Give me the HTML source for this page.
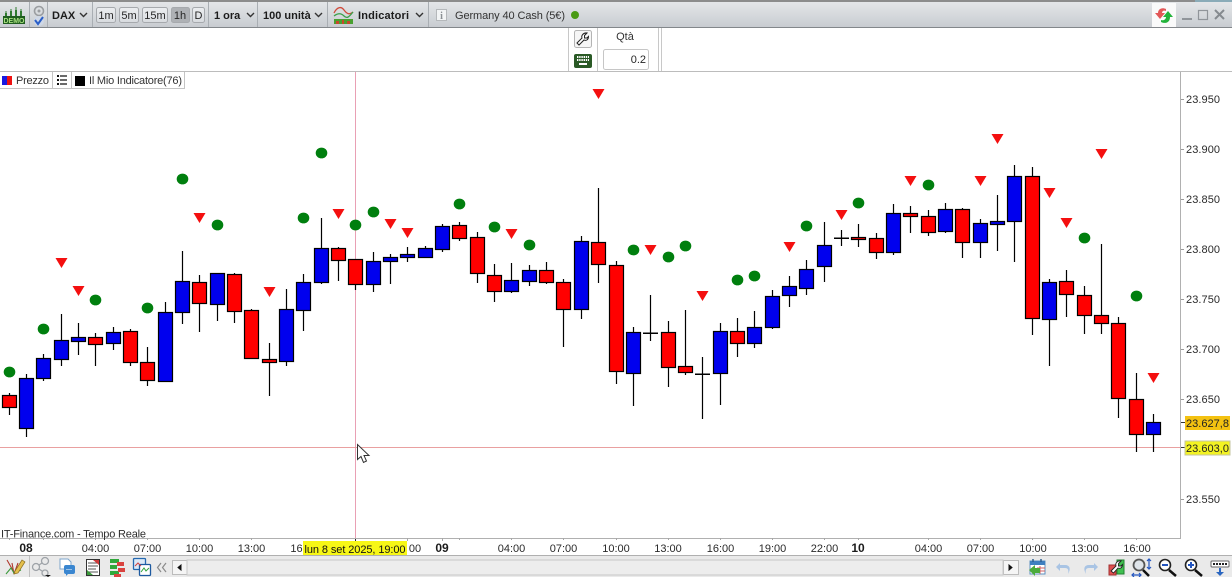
<!DOCTYPE html>
<html lang="it">
<head>
<meta charset="utf-8">
<title>Chart</title>
<style>
html,body{margin:0;padding:0;background:#fff;width:1232px;height:577px;overflow:hidden}
svg{display:block;font-family:"Liberation Sans",Arial,sans-serif}
.b{font-weight:bold;font-size:11px;fill:#1c1c1c}
.t{font-size:11px;fill:#262626}
.y{font-size:11px;fill:#2a2a2a}
.x{font-size:11px;fill:#2a2a2a;text-anchor:middle}
.xb{font-size:12px;font-weight:bold;fill:#1c1c1c;text-anchor:middle}
</style>
</head>
<body>
<svg width="1232" height="577" viewBox="0 0 1232 577" xmlns="http://www.w3.org/2000/svg">
<defs>
<linearGradient id="tb" x1="0" y1="0" x2="0" y2="1"><stop offset="0" stop-color="#e6e8ea"/><stop offset="1" stop-color="#c8ccd1"/></linearGradient>
<linearGradient id="btn" x1="0" y1="0" x2="0" y2="1"><stop offset="0" stop-color="#eceef0"/><stop offset="1" stop-color="#d8dbdf"/></linearGradient>
</defs>
<rect width="1232" height="577" fill="#fff"/>

<!-- top toolbar -->
<rect x="0" y="0" width="1232" height="27" fill="url(#tb)"/>
<rect x="0" y="0" width="1195" height="2" fill="#8c8c8c"/>
<rect x="1195" y="0" width="37" height="2" fill="#8aabb8"/>
<rect x="0" y="27" width="1232" height="1" fill="#83878b"/>
<g fill="#a9aeb3">
<rect x="29" y="2" width="1" height="25"/><rect x="47" y="2" width="1" height="25"/><rect x="92" y="2" width="1" height="25"/><rect x="208" y="2" width="1" height="25"/><rect x="257" y="2" width="1" height="25"/><rect x="327" y="2" width="1" height="25"/><rect x="428" y="2" width="1" height="25"/>
</g>

<!-- demo icon -->
<g>
<rect x="3" y="16" width="22" height="8" fill="#1f5c1f"/>
<text x="3.500" y="22.800" font-size="7.500" font-weight="bold" fill="#a8e080" textLength="21" lengthAdjust="spacingAndGlyphs">DEMO</text>
<path d="M6 11v5M11 9v7M16 7v9M21 9v7" stroke="#2e7a2e" stroke-width="1"/>
<path d="M5 13h2v3H5zM10 11h2v5h-2zM15 10h2v6h-2zM20 11h2v5h-2z" fill="#2e7a2e"/>
</g>
<!-- @ check icon -->
<circle cx="39" cy="11" r="4.500" fill="none" stroke="#9a9da0" stroke-width="1.600"/>
<circle cx="39" cy="11" r="1.500" fill="#9a9da0"/>
<circle cx="39" cy="21" r="5" fill="#cfd8e6"/>
<path d="M35 20l3 4 5-7" fill="none" stroke="#2a5fc8" stroke-width="2"/>

<text class="b" x="52" y="19">DAX</text>
<path d="M80 13l3.500 3.500L87 13" fill="none" stroke="#333" stroke-width="1.400"/>

<g stroke="#a6a9ad" fill="url(#btn)">
<rect x="96.500" y="7.500" width="19" height="15" rx="2"/>
<rect x="119.500" y="7.500" width="19" height="15" rx="2"/>
<rect x="142.500" y="7.500" width="25" height="15" rx="2"/>
<rect x="171.500" y="7.500" width="18" height="15" rx="2" fill="#aeb1b5"/>
<rect x="192.500" y="7.500" width="12" height="15" rx="2"/>
</g>
<text class="t" x="106" y="19" text-anchor="middle">1m</text>
<text class="t" x="129" y="19" text-anchor="middle">5m</text>
<text class="t" x="155" y="19" text-anchor="middle">15m</text>
<text class="t" x="180" y="19" text-anchor="middle">1h</text>
<text class="t" x="198.500" y="19" text-anchor="middle">D</text>
<text class="b" x="214" y="19">1 ora</text>
<path d="M247 13l3.500 3.500L254 13" fill="none" stroke="#333" stroke-width="1.400"/>
<text class="b" x="263" y="19">100 unità</text>
<path d="M315 13l3.500 3.500L322 13" fill="none" stroke="#333" stroke-width="1.400"/>

<!-- indicator icon -->
<path d="M334 13c3-6 7-7 10-3s5 5 9 2" fill="none" stroke="#d04a3a" stroke-width="1.300"/>
<path d="M334 16c4-3 7-3 10 0s5 1 9-4" fill="none" stroke="#3aa04a" stroke-width="1.300"/>
<rect x="334" y="19" width="19" height="5" fill="#49a030"/>
<path d="M336 21h3v3h-3zM342 20h2v4h-2zM347 21h3v3h-3z" fill="#c8482c"/>
<text class="b" x="358" y="19" textLength="51">Indicatori</text>
<path d="M416 13l3.500 3.500L423 13" fill="none" stroke="#333" stroke-width="1.400"/>

<!-- info -->
<rect x="436.500" y="9.500" width="10" height="11" fill="#f2f4f5" stroke="#b5b8bb"/>
<text x="441.500" y="19" font-size="10" font-weight="bold" fill="#8a8f94" text-anchor="middle" font-family="Liberation Serif">i</text>
<text class="t" x="455" y="19" style="fill:#333" textLength="110">Germany 40 Cash (5€)</text>
<circle cx="575" cy="15" r="4" fill="#4a9a14"/>

<!-- refresh -->
<rect x="1152" y="3" width="24" height="24" fill="#fafafa"/>
<path d="M1166 9c-4-2-8 0-8 4h-3l5 6 5-6h-3c0-2 2-3 4-2z" fill="#e25858"/>
<path d="M1161 22c4 2 9 1 9-5h3l-5-6-5 6h3c0 2-2 4-5 3z" fill="#22b33a"/>

<!-- window buttons -->
<rect x="1182" y="18" width="10" height="2" fill="#90959a"/>
<rect x="1198.500" y="10.500" width="9" height="9" fill="none" stroke="#90959a" stroke-width="1.200"/>
<path d="M1215 10l9 9M1224 10l-9 9" stroke="#858a8f" stroke-width="2"/>

<!-- middle panel -->
<rect x="0" y="71" width="1232" height="1" fill="#bcbcbc"/>
<g fill="#c8c8c8">
<rect x="568" y="28" width="1" height="43"/><rect x="597" y="28" width="1" height="43"/><rect x="658" y="28" width="1" height="43"/><rect x="661" y="28" width="1" height="43"/>
</g>
<rect x="574.500" y="30.500" width="17" height="17" rx="2" fill="#f6f6f6" stroke="#b4b4b4"/>
<path d="M587 33l-2.500 2.500 0 2.500 2.500 0 1.500-1.500c0 3-2 4.500-4.500 3.500l-5 5-2-2 5-5c-1-2.500 1.500-5.500 5-5z" fill="#fff" stroke="#222" stroke-width="1"/>
<rect x="574" y="54" width="18" height="14" rx="2" fill="#2a5a26"/>
<path d="M577 57h12M577 60h12" stroke="#fff" stroke-width="2" stroke-dasharray="1.400 .8"/>
<rect x="579" y="63" width="8" height="2" fill="#fff"/>
<text class="t" x="625" y="40" text-anchor="middle" style="fill:#333">Qtà</text>
<rect x="603.500" y="49.500" width="45" height="20" rx="2" fill="#fff" stroke="#c6c6c6"/>
<text class="t" x="646" y="63" text-anchor="end">0.2</text>

<!-- legend -->
<rect x="0" y="88" width="185" height="1" fill="#c4c4c4"/>
<rect x="52" y="72" width="1" height="16" fill="#c4c4c4"/>
<rect x="71" y="72" width="1" height="16" fill="#c4c4c4"/>
<rect x="184" y="72" width="1" height="16" fill="#c4c4c4"/>
<rect x="2" y="76" width="5" height="9" fill="#1a1ae0"/>
<rect x="7" y="76" width="5" height="9" fill="#ee1111"/>
<text class="t" x="16" y="84" style="fill:#333" textLength="33">Prezzo</text>
<path d="M57 76h2M57 80h2M57 84h2" stroke="#111" stroke-width="2"/>
<path d="M60 76h7M60 80h7M60 84h7" stroke="#111" stroke-width="1.200"/>
<rect x="75" y="76" width="10" height="10" fill="#000"/>
<text class="t" x="89" y="84" style="fill:#333" textLength="93">Il Mio Indicatore(76)</text>

<!-- crosshair -->
<rect x="355" y="72" width="1" height="466" fill="#e9a0b4"/>
<rect x="0" y="447" width="1185" height="1" fill="#e9a0a0"/>

<!-- wicks -->
<path stroke="#000" stroke-width="1.200" fill="none" d="M9.500 393V415M26.500 374V437M43.500 354V381M61.500 314V366M78.500 323V355M95.500 333V366M113.500 327V350M130.500 329V366M147.500 347V386M165.500 302V382M182.500 251V324M199.500 275V332M217.500 273V321M234.500 273V323M251.500 309V359M269.500 343V396M286.500 289V366M303.500 274V331M321.500 218V284M338.500 247V281M355.500 259V290M373.500 252V292M390.500 254V284M407.500 247V262M425.500 246V258M442.500 224V252M459.500 222V241M477.500 232V283M494.500 264V302M511.500 263V293M529.500 265V286M546.500 262V284M563.500 279V347M581.500 236V319M598.500 188V283M616.500 261V384M633.500 327V406M650.500 295V341M668.500 321V387M685.500 310V375M702.500 357V419M720.500 323V405M737.500 318V357M754.500 311V348M772.500 290V329M789.500 276V307M806.500 260V295M824.500 222V282M841.500 230V246M858.500 224V247M876.500 233V259M893.500 204V255M910.500 206V233M928.500 210V236M945.500 203V233M962.500 208V258M980.500 219V258M997.500 195V251M1014.500 165V262M1032.500 167V335M1049.500 279V366M1066.500 270V317M1084.500 286V334M1101.500 244V334M1118.500 317V418M1136.500 373V452M1153.500 414V452"/>

<!-- red bodies -->
<g fill="#ff0000" stroke="#000" stroke-width="1.200">
<rect x="2.500" y="395.500" width="14" height="12"/><rect x="88.500" y="337.500" width="14" height="7"/><rect x="123.500" y="331.500" width="14" height="31"/><rect x="140.500" y="362.500" width="14" height="18"/><rect x="192.500" y="282.500" width="14" height="21"/><rect x="227.500" y="274.500" width="14" height="37"/><rect x="244.500" y="310.500" width="14" height="48"/><rect x="262.500" y="359.500" width="14" height="3"/><rect x="331.500" y="248.500" width="14" height="12"/><rect x="348.500" y="259.500" width="14" height="25"/><rect x="452.500" y="225.500" width="14" height="13"/><rect x="470.500" y="237.500" width="14" height="36"/><rect x="487.500" y="275.500" width="14" height="16"/><rect x="539.500" y="270.500" width="14" height="12"/><rect x="556.500" y="282.500" width="14" height="27"/><rect x="591.500" y="242.500" width="14" height="22"/><rect x="609.500" y="265.500" width="14" height="106"/><rect x="661.500" y="332.500" width="14" height="35"/><rect x="678.500" y="366.500" width="14" height="6"/><rect x="730.500" y="331.500" width="14" height="12"/><rect x="851.500" y="237.500" width="14" height="2"/><rect x="869.500" y="238.500" width="14" height="14"/><rect x="903.500" y="213.500" width="14" height="3"/><rect x="921.500" y="216.500" width="14" height="16"/><rect x="955.500" y="209.500" width="14" height="33"/><rect x="1025.500" y="176.500" width="14" height="142"/><rect x="1059.500" y="281.500" width="14" height="13"/><rect x="1077.500" y="295.500" width="14" height="20"/><rect x="1094.500" y="315.500" width="14" height="8"/><rect x="1111.500" y="323.500" width="14" height="75"/><rect x="1129.500" y="399.500" width="14" height="35"/>
</g>
<!-- blue bodies -->
<g fill="#0000ee" stroke="#000" stroke-width="1.200">
<rect x="19.500" y="378.500" width="14" height="50"/><rect x="36.500" y="358.500" width="14" height="20"/><rect x="54.500" y="340.500" width="14" height="19"/><rect x="71.500" y="337.500" width="14" height="4"/><rect x="106.500" y="332.500" width="14" height="11"/><rect x="158.500" y="312.500" width="14" height="69"/><rect x="175.500" y="281.500" width="14" height="31"/><rect x="210.500" y="273.500" width="14" height="31"/><rect x="279.500" y="309.500" width="14" height="52"/><rect x="296.500" y="282.500" width="14" height="28"/><rect x="314.500" y="248.500" width="14" height="34"/><rect x="366.500" y="261.500" width="14" height="23"/><rect x="383.500" y="257.500" width="14" height="4"/><rect x="400.500" y="254.500" width="14" height="3"/><rect x="418.500" y="248.500" width="14" height="9"/><rect x="435.500" y="226.500" width="14" height="23"/><rect x="504.500" y="280.500" width="14" height="11"/><rect x="522.500" y="270.500" width="14" height="11"/><rect x="574.500" y="241.500" width="14" height="68"/><rect x="626.500" y="332.500" width="14" height="41"/><rect x="713.500" y="331.500" width="14" height="42"/><rect x="747.500" y="327.500" width="14" height="16"/><rect x="765.500" y="296.500" width="14" height="31"/><rect x="782.500" y="286.500" width="14" height="9"/><rect x="799.500" y="269.500" width="14" height="19"/><rect x="817.500" y="245.500" width="14" height="21"/><rect x="886.500" y="213.500" width="14" height="39"/><rect x="938.500" y="209.500" width="14" height="22"/><rect x="973.500" y="223.500" width="14" height="19"/><rect x="990.500" y="221.500" width="14" height="3"/><rect x="1007.500" y="176.500" width="14" height="45"/><rect x="1042.500" y="282.500" width="14" height="37"/><rect x="1146.500" y="422.500" width="14" height="12"/>
</g>
<!-- dojis -->
<g fill="#000">
<rect x="643" y="332.500" width="15" height="1.500"/><rect x="695" y="373.500" width="15" height="1.500"/><rect x="834" y="237.500" width="15" height="1.500"/>
</g>

<!-- green dots -->
<g fill="#007f0e">
<ellipse cx="9.500" cy="372" rx="5.800" ry="5.400"/><ellipse cx="43.500" cy="329" rx="5.800" ry="5.400"/><ellipse cx="95.500" cy="300" rx="5.800" ry="5.400"/><ellipse cx="147.500" cy="308" rx="5.800" ry="5.400"/><ellipse cx="182.500" cy="179" rx="5.800" ry="5.400"/><ellipse cx="217.500" cy="225" rx="5.800" ry="5.400"/><ellipse cx="303.500" cy="218" rx="5.800" ry="5.400"/><ellipse cx="321.500" cy="153" rx="5.800" ry="5.400"/><ellipse cx="355.500" cy="225" rx="5.800" ry="5.400"/><ellipse cx="373.500" cy="212" rx="5.800" ry="5.400"/><ellipse cx="459.500" cy="204" rx="5.800" ry="5.400"/><ellipse cx="494.500" cy="227" rx="5.800" ry="5.400"/><ellipse cx="529.500" cy="245" rx="5.800" ry="5.400"/><ellipse cx="633.500" cy="250" rx="5.800" ry="5.400"/><ellipse cx="668.500" cy="257" rx="5.800" ry="5.400"/><ellipse cx="685.500" cy="246" rx="5.800" ry="5.400"/><ellipse cx="737.500" cy="280" rx="5.800" ry="5.400"/><ellipse cx="754.500" cy="276" rx="5.800" ry="5.400"/><ellipse cx="806.500" cy="226" rx="5.800" ry="5.400"/><ellipse cx="858.500" cy="203" rx="5.800" ry="5.400"/><ellipse cx="928.500" cy="185" rx="5.800" ry="5.400"/><ellipse cx="1084.500" cy="238" rx="5.800" ry="5.400"/><ellipse cx="1136.500" cy="296" rx="5.800" ry="5.400"/>
</g>
<!-- red triangles -->
<g fill="#f40f0f">
<path d="M55.500 258h12l-6 10zM72.500 286h12l-6 10zM193.500 213h12l-6 10zM263.500 287h12l-6 10zM332.500 209h12l-6 10zM384.500 219h12l-6 10zM401.500 228h12l-6 10zM505.500 229h12l-6 10zM592.500 89h12l-6 10zM644.500 245h12l-6 10zM696.500 291h12l-6 10zM783.500 242h12l-6 10zM835.500 210h12l-6 10zM904.500 176h12l-6 10zM974.500 176h12l-6 10zM991.500 134h12l-6 10zM1043.500 188h12l-6 10zM1060.500 218h12l-6 10zM1095.500 149h12l-6 10zM1147.500 373h12l-6 10z"/>
</g>

<!-- right axis -->
<rect x="1180" y="72" width="1" height="466" fill="#b0b0b0"/>
<rect x="0" y="538" width="1181" height="1" fill="#b0b0b0"/>
<g fill="#9a9a9a">
<rect x="1181" y="99" width="3" height="1"/><rect x="1181" y="149" width="3" height="1"/><rect x="1181" y="199" width="3" height="1"/><rect x="1181" y="249" width="3" height="1"/><rect x="1181" y="299" width="3" height="1"/><rect x="1181" y="349" width="3" height="1"/><rect x="1181" y="399" width="3" height="1"/><rect x="1181" y="499" width="3" height="1"/>
</g>
<text class="y" x="1186" y="103" textLength="34">23.950</text><text class="y" x="1186" y="153" textLength="34">23.900</text><text class="y" x="1186" y="203" textLength="34">23.850</text><text class="y" x="1186" y="253" textLength="34">23.800</text><text class="y" x="1186" y="303" textLength="34">23.750</text><text class="y" x="1186" y="353" textLength="34">23.700</text><text class="y" x="1186" y="403" textLength="34">23.650</text><text class="y" x="1186" y="503" textLength="34">23.550</text>
<rect x="1181" y="422" width="4" height="1" fill="#333"/>
<rect x="1181" y="447" width="4" height="1" fill="#333"/>
<rect x="1185" y="416" width="45" height="14" fill="#f4c211"/>
<text class="y" x="1186" y="427" style="fill:#222" textLength="43">23.627,8</text>
<rect x="1185" y="441" width="45" height="14" fill="#f3f323" stroke="#c4c4a0"/>
<text class="y" x="1186" y="452" style="fill:#222" textLength="43">23.603,0</text>

<!-- source -->
<text x="1" y="537.500" font-size="11" fill="#2e2e2e" textLength="145">IT-Finance.com - Tempo Reale</text>

<!-- x ticks -->
<path stroke="#a8a8a8" d="M9.500 538v2M43.500 538v2M95.500 538v2M147.500 538v2M199.500 538v2M251.500 538v2M407.500 538v3M442.500 538v3M459.500 538v2M511.500 538v2M563.500 538v2M616.500 538v2M668.500 538v2M720.500 538v2M772.500 538v2M824.500 538v2M858.500 538v2M928.500 538v2M980.500 538v2M1032.500 538v2M1084.500 538v2M1136.500 538v2" fill="none"/>
<rect x="355" y="539" width="1" height="2" fill="#222"/>

<!-- x labels -->
<text class="xb" x="26" y="552">08</text>
<text class="x" x="95.500" y="552">04:00</text>
<text class="x" x="147.500" y="552">07:00</text>
<text class="x" x="199.500" y="552">10:00</text>
<text class="x" x="251.500" y="552">13:00</text>
<text class="x" x="296.500" y="552">16</text>
<rect x="303" y="541" width="104" height="14" fill="#f7f716"/>
<text x="304.500" y="553" font-size="11" fill="#111" textLength="101">lun 8 set 2025, 19:00</text>
<text class="x" x="415" y="552">00</text>
<text class="xb" x="442" y="552">09</text>
<text class="x" x="511.500" y="552">04:00</text>
<text class="x" x="563.500" y="552">07:00</text>
<text class="x" x="616" y="552">10:00</text>
<text class="x" x="668" y="552">13:00</text>
<text class="x" x="720.500" y="552">16:00</text>
<text class="x" x="772.500" y="552">19:00</text>
<text class="x" x="824.500" y="552">22:00</text>
<text class="xb" x="858" y="552">10</text>
<text class="x" x="928.500" y="552">04:00</text>
<text class="x" x="980.500" y="552">07:00</text>
<text class="x" x="1033" y="552">10:00</text>
<text class="x" x="1085" y="552">13:00</text>
<text class="x" x="1137" y="552">16:00</text>

<!-- mouse pointer -->
<path d="M357.500 444.500v15l3.500-3 2.500 6 3-1.500-2.500-5.500h5z" fill="#fff" stroke="#333" stroke-width="1"/>

<!-- bottom toolbar -->
<rect x="0" y="555" width="1232" height="1" fill="#b0b0b0"/>
<rect x="0" y="556" width="1232" height="21" fill="#eaeaea"/>
<rect x="29" y="556" width="1" height="21" fill="#c0c0c0"/>

<!-- pencil chart -->
<path d="M7 560l8 14M12 563l2 11M18 563l-4 11" stroke="#b0392d" stroke-width="1.100" fill="none"/>
<path d="M6 574l5-6 3 5 7-3" stroke="#3d9a3d" stroke-width="1.100" fill="none"/>
<path d="M15 571l7-11 3 2-7 11-4 1z" fill="#e4bf4c" stroke="#8a6d20" stroke-width=".7"/>
<!-- share -->
<g fill="none" stroke="#9ea3a8" stroke-width="1.300"><circle cx="45" cy="561" r="3.500"/><circle cx="36" cy="567" r="3.500"/><circle cx="45" cy="573" r="3"/><path d="M39 565l3-2M39 569l3 2"/></g>
<path d="M45 575h6l-3 2z" fill="#111"/>
<!-- doc chat -->
<path d="M60 559h8l3 3v7h-11z" fill="#fff" stroke="#7ea6cc"/>
<rect x="64" y="565" width="11" height="9" rx="2" fill="#3a86d0"/>
<path d="M66 573v3l3-3z" fill="#3a86d0"/>
<path d="M66.500 569.500h6" stroke="#fff" stroke-dasharray="1 1"/>
<!-- notes -->
<rect x="86.500" y="559.500" width="13" height="16" fill="#fff" stroke="#333"/>
<path d="M88 563h10M88 566h10M88 569h8M88 572h10" stroke="#555"/>
<path d="M93 560h6v5z" fill="#cf3b3b"/>
<path d="M87 570l6 5h-6z" fill="#3c9b3c"/>
<!-- bricks -->
<g fill="#2fa83a"><rect x="110" y="559" width="9" height="4"/><rect x="110" y="565" width="7" height="4"/><rect x="110" y="571" width="9" height="4"/></g>
<g fill="#d9433f"><rect x="117" y="562" width="7" height="4"/><rect x="118" y="568" width="7" height="4"/><rect x="114" y="574" width="7" height="3"/></g>
<!-- windows -->
<rect x="133.500" y="558.500" width="12" height="11" rx="1" fill="#dbe9f7" stroke="#2468b0" stroke-width="1.300"/>
<rect x="139.500" y="564.500" width="11" height="11" rx="1" fill="#fff" stroke="#1d5aa0" stroke-width="1.300"/>
<path d="M135 566l3-3 3 3" stroke="#d04040" fill="none"/>
<path d="M141 572l3-4 2 3 3-3" stroke="#2ea03a" fill="none"/>
<!-- chevrons left -->
<path d="M161 563l-3.500 4.500 3.500 4.500M166 563l-3.500 4.500 3.500 4.500" fill="none" stroke="#8a8a8a" stroke-width="1.200"/>

<!-- scrollbar -->
<rect x="172" y="560" width="847" height="15" fill="#e4e4e4"/>
<rect x="172.500" y="560.500" width="15" height="14" fill="#f5f5f5" stroke="#bcbcbc"/>
<rect x="1003.500" y="560.500" width="15" height="14" fill="#f5f5f5" stroke="#bcbcbc"/>
<rect x="187" y="560" width="816" height="15" fill="#ededed" stroke="#c8c8c8"/>
<path d="M181 565l-3 2.500 3 2.500z" fill="#111" stroke="#111"/>
<path d="M1009 565l3 2.500-3 2.500z" fill="#111" stroke="#111"/>

<!-- calendar -->
<rect x="1030" y="561" width="15" height="13" fill="#fff" stroke="#5f90c0"/>
<rect x="1030" y="561" width="15" height="4" fill="#3f7fc0"/>
<path d="M1033 559v3M1041 559v3" stroke="#2d5f90" stroke-width="1.500"/>
<path d="M1037 568h8M1037 571h8M1040 566v8" stroke="#d06060"/>
<path d="M1029 570l6-5v3h5v5h-5v3z" fill="#4cab3c"/>
<!-- undo / redo -->
<path d="M1060 563l-4 4 4 4v-3h5c3 0 4 2 3 6 3-5 2-9-3-9h-5z" fill="#a9c4e4"/>
<path d="M1094 563l4 4-4 4v-3h-5c-3 0-4 2-3 6-3-5-2-9 3-9h5z" fill="#a9c4e4"/>
<!-- wrench candle -->
<rect x="1109" y="565" width="7" height="10" fill="#e05050" stroke="#a03030"/>
<rect x="1117" y="560" width="7" height="14" fill="#3fc050" stroke="#208030"/>
<path d="M1121 561l-2.500 2.500v2.500h2.500l1.500-1.500c0 3-2 4.500-4.500 3.500l-4.500 5-2.500-2 5-5c-1-3 1.500-5.500 4.500-5z" fill="#fff" stroke="#222" stroke-width=".9"/>
<!-- magnifier with arrows -->
<circle cx="1139" cy="565" r="5.500" fill="#dfe4ea" stroke="#555" stroke-width="1.800"/>
<path d="M1143 570l6 6" stroke="#111" stroke-width="2.500"/>
<path d="M1149 559v10M1147 561l2-2 2 2M1147 567l2 2 2-2" fill="none" stroke="#2456c0" stroke-width="1.200"/>
<path d="M1132 575h9M1134 573l-2 2 2 2M1139 573l2 2-2 2" fill="none" stroke="#2456c0" stroke-width="1.200"/>
<!-- zoom minus -->
<circle cx="1165" cy="565" r="5.500" fill="#fff" stroke="#222" stroke-width="1.600"/>
<path d="M1162 565h6" stroke="#2456c0" stroke-width="2"/>
<path d="M1169 570l7 6" stroke="#111" stroke-width="2.500"/>
<!-- zoom plus -->
<circle cx="1191" cy="565" r="5.500" fill="#fff" stroke="#222" stroke-width="1.600"/>
<path d="M1188 565h6M1191 562v6" stroke="#2456c0" stroke-width="2"/>
<path d="M1195 570l7 6" stroke="#111" stroke-width="2.500"/>
<!-- bar with down arrow -->
<rect x="1211" y="561" width="18" height="6" rx="1" fill="#fff" stroke="#666"/>
<path d="M1213 564h14" stroke="#222" stroke-width="2" stroke-dasharray="2 1"/>
<path d="M1219 568h2v4h3l-4 4-4-4h3z" fill="#2a66c0"/>
</svg>
</body>
</html>
